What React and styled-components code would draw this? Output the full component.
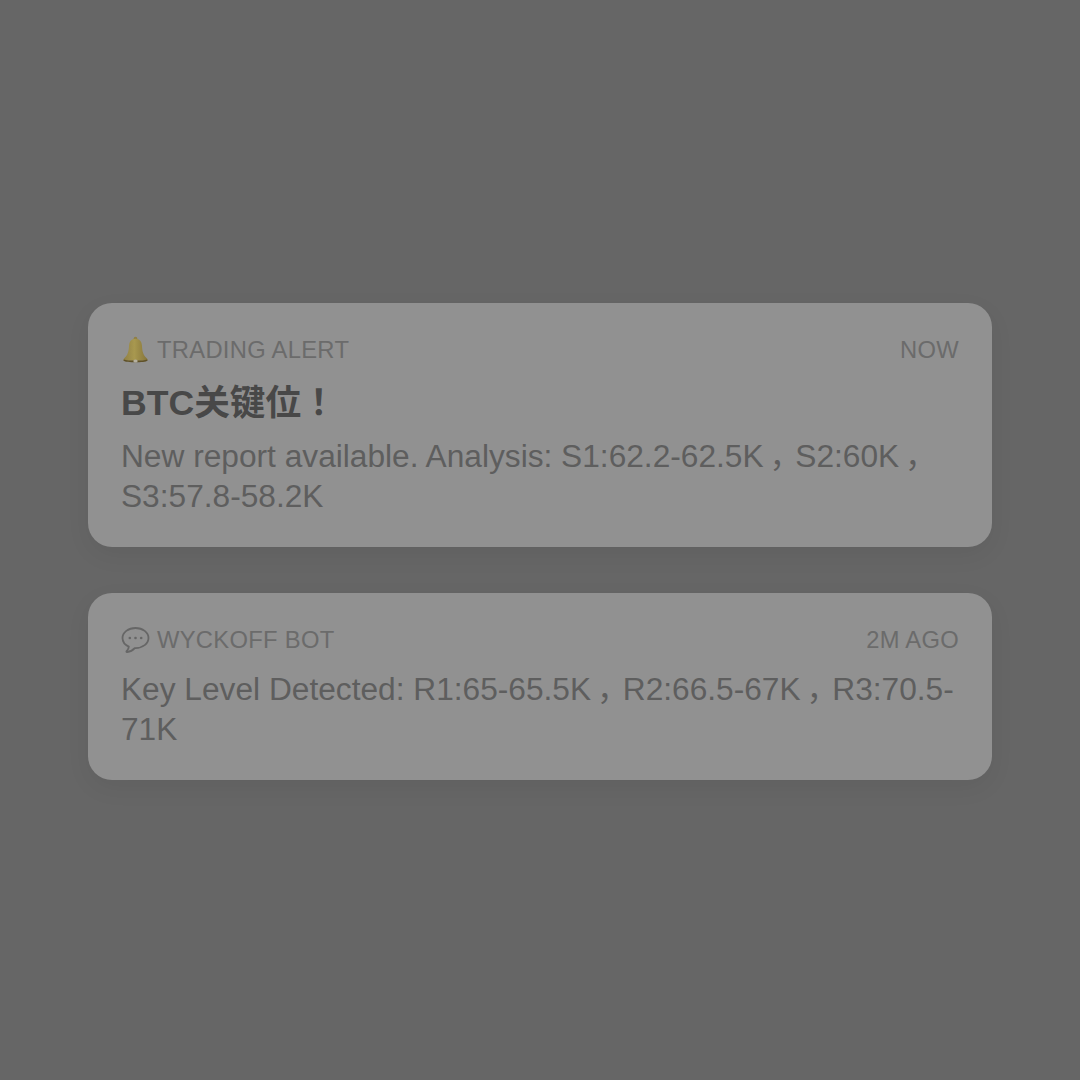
import React from 'react';
import styled, { createGlobalStyle } from 'styled-components';

const GlobalStyle = createGlobalStyle`
	html, body {
		margin: 0;
		padding: 0;
		background: #666666;
	}
	#root {
		height: 1080px;
	}
`;

const Page = styled.div`
	box-sizing: border-box;
	height: 1080px;
	padding: 2px 88px 0;
	display: flex;
	flex-direction: column;
	justify-content: center;
	gap: 46px;
	background: #666666;
	font-family: 'Liberation Sans', 'Noto Sans CJK KR', sans-serif;
`;

const Card = styled.div`
	box-sizing: border-box;
	padding: 26px 33px 31px;
	background: #919191;
	border-radius: 24px;
	box-shadow: 0 8px 24px rgba(0, 0, 0, 0.06);
`;

const CardHeader = styled.div`
	display: flex;
	align-items: center;
	justify-content: space-between;
	height: 42px;
	font-size: 23.76px;
	letter-spacing: 0.3px;
	color: #6b6b6b;
`;

const Source = styled.div`
	display: flex;
	align-items: center;
	gap: 7px;
`;

const Title = styled.div`
	margin-top: 10px;
	font-size: 35.64px;
	line-height: 44px;
	font-weight: 700;
	color: #484848;
`;

const Message = styled.div`
	margin-top: ${(p) => p.$gap}px;
	font-size: 31.68px;
	line-height: 40px;
	color: #5e5e5e;
`;

// full-width comma sits in the middle of its em box in the reference
const Comma = styled.span`
	display: inline-block;
	width: 1em;
	text-align: center;
	font-feature-settings: 'palt';
`;

const BellIcon = () => (
	<svg width="29" height="28" viewBox="0 0 29 28">
		<defs>
			<linearGradient id="bell" x1="0" y1="0" x2="1" y2="0">
				<stop offset="0" stopColor="#8f7f45" />
				<stop offset="0.45" stopColor="#a8984f" />
				<stop offset="1" stopColor="#85743a" />
			</linearGradient>
		</defs>
		<circle cx="14.5" cy="2.6" r="1.8" fill="#8f7f45" />
		<path
			d="M14.5 2.8C10.2 2.8 8.2 5.800 8 10C7.800 15 7 19 2.800 22.800C2 23.600 2.400 24.800 3.600 24.800H25.400C26.600 24.800 27 23.600 26.200 22.800C22 19 21.200 15 21 10C20.800 5.800 18.800 2.800 14.500 2.800Z"
			fill="url(#bell)"
		/>
		<path d="M3 23.400c3 1.600 20 1.600 23 0l.6 1.300c-3 2-21.200 2-24.200 0z" fill="#5f5128" />
		<ellipse cx="14.500" cy="25" rx="2.200" ry="1.500" fill="#b5b0a0" />
	</svg>
);

const ChatIcon = () => (
	<svg width="29" height="28" viewBox="0 0 29 28" fill="none">
		<path
			d="M14.500 2C7.300 2 1.500 6.400 1.500 12c0 3.700 2.500 6.900 6.300 8.600-.1 1.600-.9 3.300-2.200 4.600-.4.400-.1.900.4.800 3-.3 6-1.900 7.700-3.900.3 0 .5 0 .8 0 7.200 0 13-4.500 13-10.100S21.700 2 14.500 2z"
			stroke="#666666"
			strokeWidth="1.800"
			strokeLinejoin="round"
		/>
		<circle cx="8.800" cy="12" r="1.300" fill="#666666" />
		<circle cx="14.500" cy="12" r="1.300" fill="#666666" />
		<circle cx="20.200" cy="12" r="1.300" fill="#666666" />
	</svg>
);

const App = () => (
	<>
		<GlobalStyle />
		<Page>
			<Card>
				<CardHeader>
					<Source>
						<BellIcon />
						<span>TRADING ALERT</span>
					</Source>
					<span>NOW</span>
				</CardHeader>
				<Title>BTC关键位！</Title>
				<Message $gap={11}>
					New report available. Analysis: S1:62.2-62.5K<Comma>，</Comma>S2:60K<Comma>，</Comma>S3:57.8-58.2K
				</Message>
			</Card>
			<Card>
				<CardHeader>
					<Source>
						<ChatIcon />
						<span>WYCKOFF BOT</span>
					</Source>
					<span>2M AGO</span>
				</CardHeader>
				<Message $gap={8}>
					Key Level Detected: R1:65-65.5K<Comma>，</Comma>R2:66.5-67K<Comma>，</Comma>R3:70.5-71K
				</Message>
			</Card>
		</Page>
	</>
);

export default App;
